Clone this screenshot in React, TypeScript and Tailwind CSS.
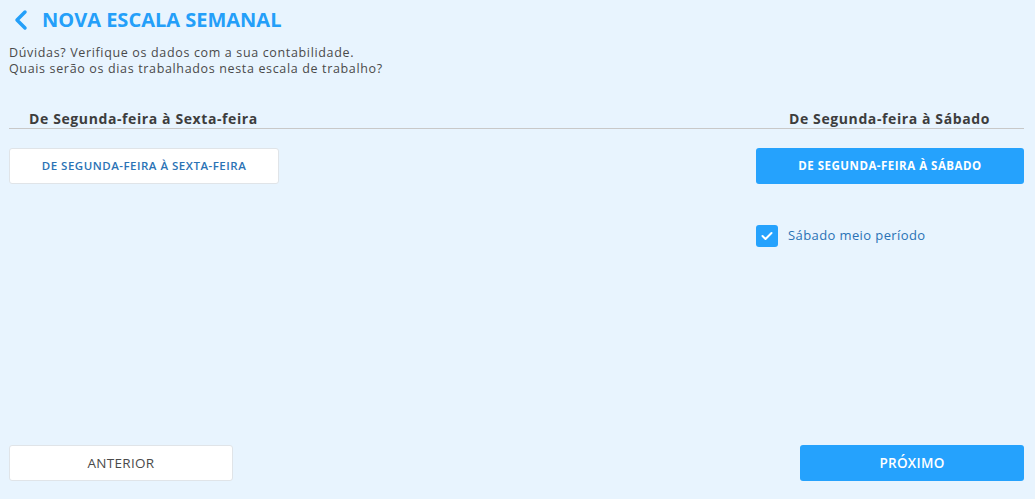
import React, { useState } from 'react';

const font = { fontFamily: '"Open Sans", "Noto Sans", sans-serif' };

const App: React.FC = () => {
  const [meioPeriodo, setMeioPeriodo] = useState(true);

  return (
    <div className="h-screen w-full bg-[#e8f4fe] flex flex-col pl-[9px] pr-[11px] pt-[8px] pb-[18px]" style={font}>
      <div className="h-[24px] flex items-center gap-[13px] pl-[4px]">
        <svg width="16" height="22" viewBox="0 0 16 22" fill="none">
          <path d="M12 3 L4 11 L12 19" stroke="#249ff9" strokeWidth="3.5" strokeLinecap="round" strokeLinejoin="round" />
        </svg>
        <h1 className="text-[20px] leading-[24px] font-bold text-[#249ff9]">NOVA ESCALA SEMANAL</h1>
      </div>

      <div className="mt-[13px] text-[12.5px] leading-[16px] text-[#4a4a4a] tracking-[0.65px]">
        <p>Dúvidas? Verifique os dados com a sua contabilidade.</p>
        <p>Quais serão os dias trabalhados nesta escala de trabalho?</p>
      </div>

      <div className="mt-[33px] flex justify-between border-b border-[#c8c8c8]">
        <div className="w-[269px] text-center text-[14px] leading-[18px] font-bold text-[#3d3d3d] tracking-[0.6px]">De Segunda-feira à Sexta-feira</div>
        <div className="w-[269px] text-center text-[14px] leading-[18px] font-bold text-[#3d3d3d] tracking-[0.6px]">De Segunda-feira à Sábado</div>
      </div>

      <div className="mt-[19px] flex justify-between">
        <div className="w-[270px]">
          <button className="w-full h-[36px] bg-white border border-[#e0e4e8] rounded-[3px] text-[11.5px] font-semibold text-[#2a72b5] tracking-[0.5px]">
            DE SEGUNDA-FEIRA À SEXTA-FEIRA
          </button>
        </div>
        <div className="w-[268px] flex flex-col">
          <button className="w-full h-[36px] bg-[#25a2fd] rounded-[3px] text-[11.5px] font-bold text-white tracking-[0.5px]">
            DE SEGUNDA-FEIRA À SÁBADO
          </button>
          <label className="mt-[41px] flex items-center gap-[10px] cursor-pointer">
            <span
              onClick={() => setMeioPeriodo(!meioPeriodo)}
              className={`w-[22px] h-[22px] rounded-[3px] flex items-center justify-center ${meioPeriodo ? 'bg-[#25a2fd]' : 'bg-white border border-[#c8c8c8]'}`}
            >
              {meioPeriodo && (
                <svg width="12" height="10" viewBox="0 0 12 10" fill="none">
                  <path d="M1.5 5 L4.5 8 L10.5 2" stroke="white" strokeWidth="2" strokeLinecap="round" strokeLinejoin="round" />
                </svg>
              )}
            </span>
            <span className="text-[13px] text-[#2a72b5] tracking-[0.4px]">Sábado meio período</span>
          </label>
        </div>
      </div>

      <div className="mt-auto flex justify-between">
        <button className="w-[224px] h-[36px] bg-white border border-[#e0e4e8] rounded-[3px] text-[13.5px] text-[#4a4a4a] tracking-[0.3px]">
          ANTERIOR
        </button>
        <button className="w-[224px] h-[36px] bg-[#25a2fd] rounded-[3px] text-[13.5px] font-semibold text-white tracking-[0.3px]">
          PRÓXIMO
        </button>
      </div>
    </div>
  );
};

export default App;
